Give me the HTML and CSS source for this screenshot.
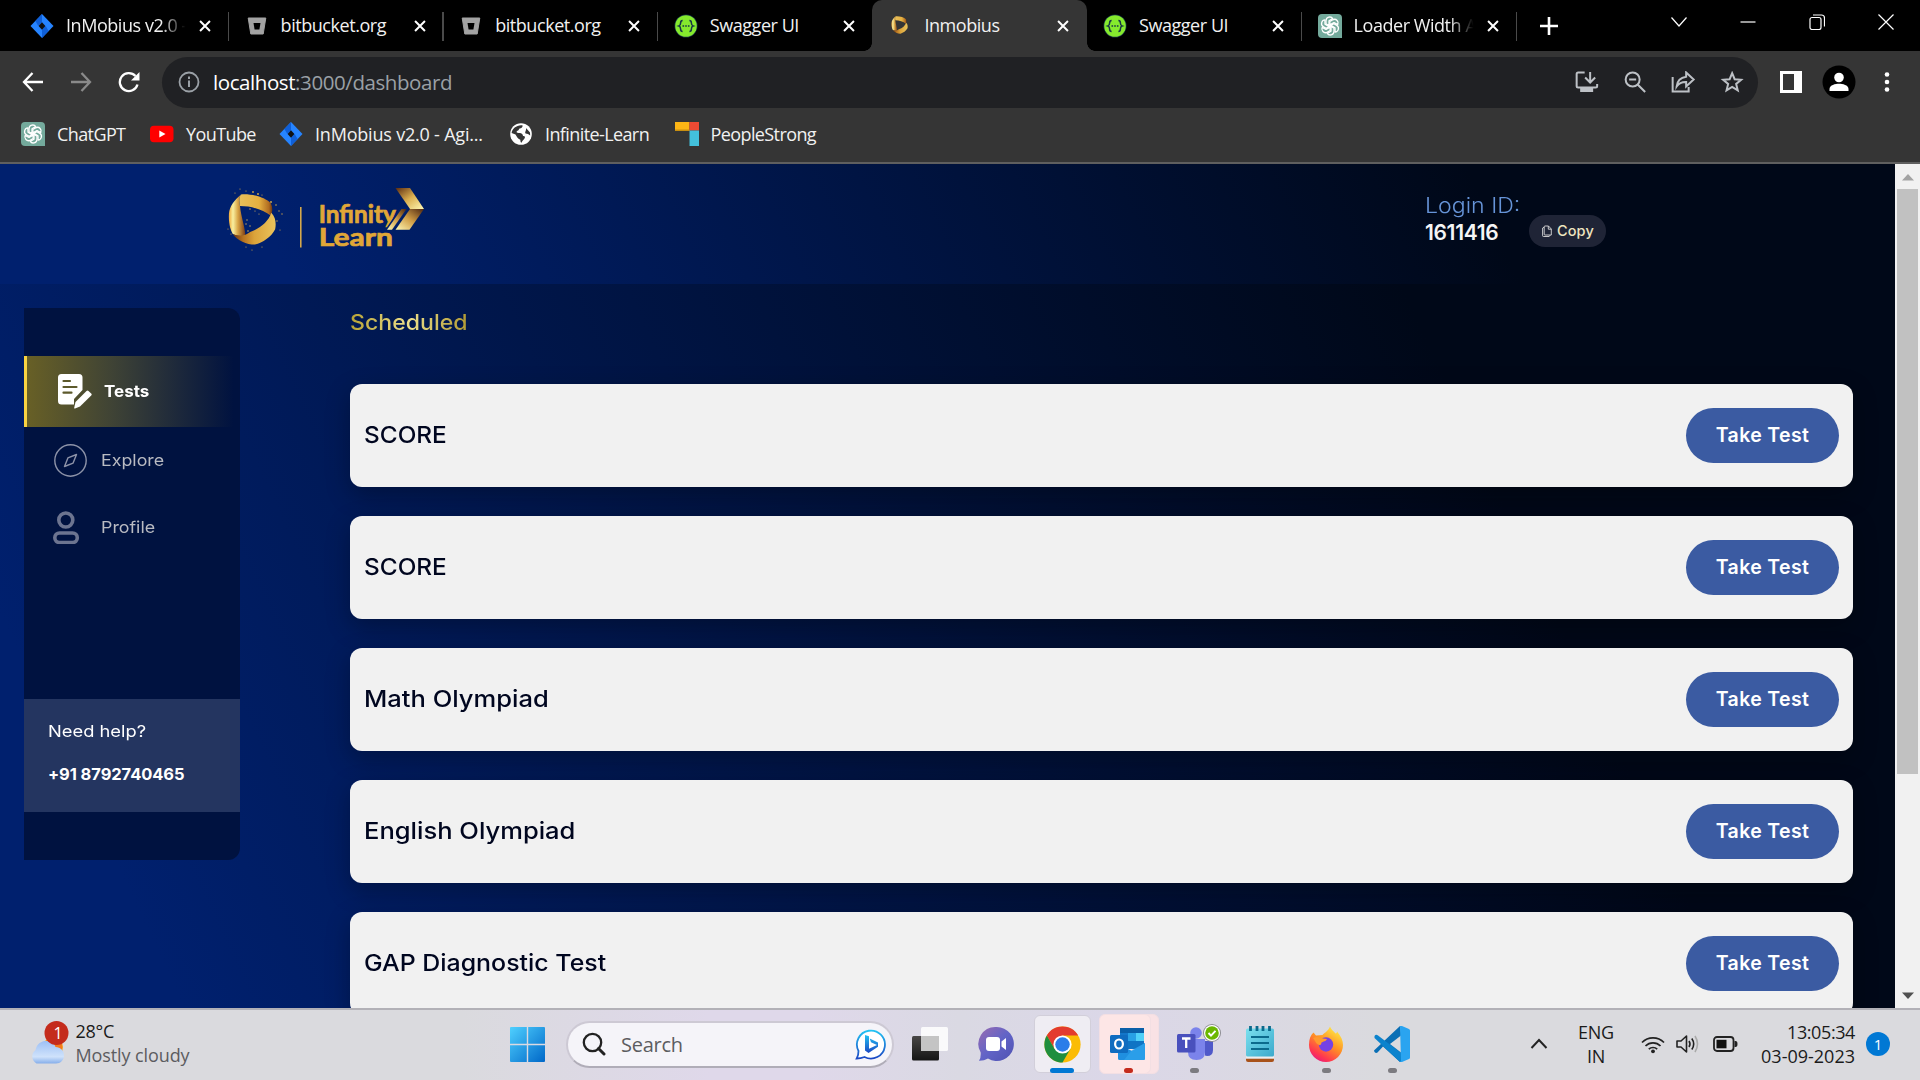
FILE: index.html
```
<!DOCTYPE html>
<html lang="en">
<head>
<meta charset="utf-8">
<title>Inmobius</title>
<link rel="stylesheet" href="styles.css">
</head>
<body>
<svg class="defs" width="0" height="0" aria-hidden="true">
  <defs>
    <linearGradient id="goldH" x1="0" y1="0" x2="1" y2="0"><stop offset="0" stop-color="#f0a93a"/><stop offset=".25" stop-color="#f8efa0"/><stop offset=".55" stop-color="#d9a445"/><stop offset="1" stop-color="#7b3d16"/></linearGradient>
    <linearGradient id="goldTop" x1="0" y1="0" x2="1" y2="0"><stop offset="0" stop-color="#e8c05a"/><stop offset=".6" stop-color="#e5b040"/><stop offset=".9" stop-color="#b06b20"/><stop offset="1" stop-color="#6b3513"/></linearGradient>
    <linearGradient id="goldBot" x1="0" y1="0" x2="1" y2="0"><stop offset="0" stop-color="#6b3513"/><stop offset=".25" stop-color="#b87420"/><stop offset=".5" stop-color="#dba33a"/><stop offset="1" stop-color="#ebc45c"/></linearGradient>
    <linearGradient id="arrowTop" x1="0" y1="0" x2="1" y2="1"><stop offset="0" stop-color="#5a2a10"/><stop offset=".5" stop-color="#dcb050"/><stop offset="1" stop-color="#fff9b5"/></linearGradient>
    <linearGradient id="arrowBot" x1="1" y1="0" x2="0" y2="1"><stop offset="0" stop-color="#4a2410"/><stop offset=".5" stop-color="#cf9c45"/><stop offset="1" stop-color="#fff9b5"/></linearGradient>
    <linearGradient id="win" x1="0" y1="0" x2="1" y2="1"><stop offset="0" stop-color="#4fd0ff"/><stop offset="1" stop-color="#0067c8"/></linearGradient>
    <linearGradient id="bing" x1="0" y1="0" x2="0" y2="1"><stop offset="0" stop-color="#22c3f3"/><stop offset="1" stop-color="#1b48c4"/></linearGradient>
    <linearGradient id="chat" x1="0" y1="0" x2="1" y2="1"><stop offset="0" stop-color="#9a6bb0"/><stop offset=".5" stop-color="#6264c7"/><stop offset="1" stop-color="#4f52b2"/></linearGradient>
    <linearGradient id="cloud" x1="0" y1="0" x2="0" y2="1"><stop offset="0" stop-color="#9dc0f5"/><stop offset=".7" stop-color="#cfe2fb"/><stop offset="1" stop-color="#86aeea"/></linearGradient>
    <linearGradient id="fox" x1=".8" y1="0" x2=".2" y2="1"><stop offset="0" stop-color="#fff14a"/><stop offset=".45" stop-color="#ff9324"/><stop offset=".8" stop-color="#ff3750"/><stop offset="1" stop-color="#e31587"/></linearGradient>
    <linearGradient id="note" x1="0" y1="0" x2="1" y2="1"><stop offset="0" stop-color="#7be0ee"/><stop offset="1" stop-color="#3ba9cc"/></linearGradient>
    <linearGradient id="dark" x1="0" y1="0" x2="0" y2="1"><stop offset="0" stop-color="#484645"/><stop offset="1" stop-color="#151515"/></linearGradient>
    <symbol id="i-jira" viewBox="0 0 24 24"><path d="M12 0l11.500 12L12 24 .5 12z" fill="#2684ff"/><path d="M12 0v8.200L8.300 12 5.400 6.900zM12 24v-8.200l3.700-3.800 2.900 5.100z" fill="#0f5fd8"/><path d="M12 8.200l3.400 3.800-3.400 3.800L8.600 12z" fill="#111"/></symbol>
    <symbol id="i-bucket" viewBox="0 0 24 24"><path d="M3.200 4h17.600l-2.600 16H5.800z" fill="#a3a3a3" stroke="#a3a3a3" stroke-linejoin="round"/><path d="M8.500 9h7l-1.100 6.500H9.600z" fill="#000"/></symbol>
    <symbol id="i-swagger" viewBox="0 0 24 24"><circle cx="12" cy="12" r="11.500" fill="#173647"/><circle cx="12" cy="12" r="10.800" fill="#85ea2d"/><path d="M8.600 6.500c-2 0-2 1-2 2.500s0 2.500-1.700 3c1.700.5 1.700 1.500 1.700 3s0 2.500 2 2.500M15.400 6.500c2 0 2 1 2 2.500s0 2.500 1.700 3c-1.700.5-1.700 1.500-1.700 3s0 2.500-2 2.500" fill="none" stroke="#173647" stroke-width="1.500"/><path d="M8.500 12h1.600m1.100 0h1.600m1.100 0h1.600" stroke="#173647" stroke-width="1.500"/></symbol>
    <symbol id="i-gpt" viewBox="0 0 24 24"><path d="M4 0h16a4 4 0 0 1 4 4v20H4a4 4 0 0 1-4-4V4a4 4 0 0 1 4-4z" fill="#74aa9c"/><g fill="none" stroke="#fff" stroke-width="1.300" stroke-linejoin="round"><path id="petal" d="M12 12.200l-4-2.300V6.800c0-4.300 5.200-4.800 6.700-2.200L11 6.800v4.800"/><use href="#petal" transform="rotate(60 12 12)"/><use href="#petal" transform="rotate(120 12 12)"/><use href="#petal" transform="rotate(180 12 12)"/><use href="#petal" transform="rotate(240 12 12)"/><use href="#petal" transform="rotate(300 12 12)"/></g></symbol>
    <symbol id="i-ring" viewBox="0 0 52 54"><path d="M13 1C7 6 1 13 .5 21c-.5 8 1 16 4 21 4 2 9 3 13 1C17 34 13 24 12 13 11 8 11 4 13 1z" fill="url(#goldH)"/><path d="M13 1c11-1 25 3 31 9 2 4 2 8 0 13-8-6-20-10-32-10-1-5-1-9 1-12z" fill="url(#goldTop)"/><path d="M44.500 20c5 5 5 12 4 17-4 8-13 14-21 16-9 0-18-4-23-11 7 3 13 2 18-2 11-4 19-11 22-20z" fill="url(#goldBot)"/></symbol>
    <symbol id="i-x" viewBox="0 0 20 20"><path d="M4.500 4.500l11 11m0-11l-11 11" stroke="#fff" stroke-width="2.200"/></symbol>
  </defs>
</svg>

<div class="screen">
  <div class="tabs">
    <div class="tab"><svg class="fav"><use href="#i-jira"/></svg><span class="tab-text tab-text--fade">InMobius v2.0 -</span><svg class="close"><use href="#i-x"/></svg></div>
    <div class="tab tab--line"><svg class="fav"><use href="#i-bucket"/></svg><span class="tab-text">bitbucket.org</span><svg class="close"><use href="#i-x"/></svg></div>
    <div class="tab tab--line"><svg class="fav"><use href="#i-bucket"/></svg><span class="tab-text">bitbucket.org</span><svg class="close"><use href="#i-x"/></svg></div>
    <div class="tab tab--line"><svg class="fav"><use href="#i-swagger"/></svg><span class="tab-text">Swagger UI</span><svg class="close"><use href="#i-x"/></svg></div>
    <div class="tab tab--active"><svg class="fav fav--ring"><use href="#i-ring"/></svg><span class="tab-text">Inmobius</span><svg class="close"><use href="#i-x"/></svg></div>
    <div class="tab"><svg class="fav"><use href="#i-swagger"/></svg><span class="tab-text">Swagger UI</span><svg class="close"><use href="#i-x"/></svg></div>
    <div class="tab tab--line tab--last"><svg class="fav"><use href="#i-gpt"/></svg><span class="tab-text tab-text--fade">Loader Width A</span><svg class="close"><use href="#i-x"/></svg></div>
    <div class="new-tab"><svg width="20" height="20" viewBox="0 0 20 20"><path d="M10 1v18M1 10h18" stroke="#fff" stroke-width="2.600"/></svg></div>
    <div class="window-controls">
      <svg width="16" height="16" viewBox="0 0 16 16"><path d="M.5 3.500L8 12l7.500-8.500"/></svg>
      <svg width="16" height="16" viewBox="0 0 16 16"><path d="M.5 8h15"/></svg>
      <svg width="16" height="16" viewBox="0 0 16 16"><rect x="1" y="3.500" width="11" height="12" rx="2"/><path d="M4 1h8.500q3 0 3 3v8.500"/></svg>
      <svg width="16" height="16" viewBox="0 0 16 16"><path d="M.5.500l15 15m0-15l-15 15"/></svg>
    </div>
  </div>

  <div class="toolbar">
    <div class="tool"><svg width="22" height="20" viewBox="0 0 22 20" class="nav"><path d="M21 10H2m8.500-9L2 10l8.500 9"/></svg></div>
    <div class="tool"><svg width="22" height="20" viewBox="0 0 22 20" class="nav nav--off"><path d="M1 10h19M11.500 1l8.500 9-8.500 9"/></svg></div>
    <div class="tool"><svg width="22" height="22" viewBox="0 0 22 22" class="nav"><path d="M19.500 13.500A9 9 0 1 1 17.500 5"/><path d="M21.500 1v8.500H13z" fill="#fff" stroke="none"/></svg></div>
    <div class="omnibox">
      <svg width="22" height="22" viewBox="0 0 22 22"><circle cx="11" cy="11" r="9.500" fill="none" stroke="#9aa0a6" stroke-width="1.800"/><path d="M11 9.500V16M11 5.500V8" stroke="#9aa0a6" stroke-width="2"/></svg>
      <span class="url"><span class="host">localhost</span>:3000/dashboard</span>
      <div class="omni-icons">
        <svg width="24" height="22" viewBox="0 0 24 22"><path d="M9.500 1.500H3q-1.500 0-1.500 1.500v12Q1.500 16.500 3 16.500h17.500q1.500 0 1.500-1.500v-2M15 1v10m-5-4.500l5 5 5-5"/><path d="M5 17h13v4H5z" fill="#bdc1c6" stroke="none"/></svg>
        <svg width="22" height="22" viewBox="0 0 22 22"><circle cx="8.500" cy="8.500" r="7"/><path d="M13.500 13.500L21 21M5 8.500h7"/></svg>
        <svg width="24" height="22" viewBox="0 0 24 22"><path d="M1.500 6v14.500h16V16M15 1.500l7.500 7-7.500 7v-4.500c-4-.2-7 1-9.500 4.500.5-5 3.500-9 9.500-9.800z"/></svg>
        <svg width="22" height="22" viewBox="0 0 22 22"><path d="M11 2.200l2.500 6 6.500.5-5 4.200 1.600 6.400L11 15.900l-5.600 3.400L7 12.900 2 8.700l6.500-.5z"/></svg>
      </div>
    </div>
    <div class="tool tool--panel"><svg width="22" height="22" viewBox="0 0 22 22"><path fill="#fff" fill-rule="evenodd" d="M0 0h22v22H0zM3 3v16h11V3z"/></svg></div>
    <div class="tool"><svg width="34" height="34" viewBox="0 0 34 34"><circle cx="17" cy="17" r="16.500" fill="#000"/><circle cx="17" cy="12.500" r="4.800" fill="#fff"/><path d="M7.500 26v-2c0-4 6-5.300 9.500-5.300s9.500 1.300 9.500 5.300v2z" fill="#fff"/></svg></div>
    <div class="tool"><svg width="6" height="22" viewBox="0 0 6 22" fill="#fff"><circle cx="3" cy="3.500" r="2.300"/><circle cx="3" cy="11" r="2.300"/><circle cx="3" cy="18.500" r="2.300"/></svg></div>
  </div>

  <div class="bookmarks">
    <div class="bookmark"><svg class="fav"><use href="#i-gpt"/></svg>ChatGPT</div>
    <div class="bookmark"><svg class="fav" viewBox="0 0 24 24"><rect x="0" y="3.800" width="23.500" height="16.500" rx="4" fill="#f00"/><path d="M9.300 8.500l6.200 3.500-6.200 3.500z" fill="#fff"/></svg>YouTube</div>
    <div class="bookmark bookmark--long"><svg class="fav"><use href="#i-jira"/></svg>InMobius v2.0 - Agi...</div>
    <div class="bookmark"><svg class="fav" viewBox="0 0 24 24"><circle cx="12" cy="12" r="10.800" fill="#fff"/><path d="M13.500 3.300c.5 2-1 3-3 3.200-1 1-.5 2-2.500 2.500-1 1 0 2 1.500 2 2 0 4.500.5 4.500 3 2-.2 2.500 1 1.500 2.500-1 2-2 1.500-3 4.200-1.200-.5-1-2-1.200-3-2.800-1-3.500-3-4.800-5.200L2.600 11c.6-4.500 5.400-8.500 10.900-7.700zM17 6l4 4.500.2 3-2.200-1.500-2.500-.5c-1-2 1-2.500.5-5.500z" fill="#353535"/></svg>Infinite-Learn</div>
    <div class="bookmark"><svg class="fav" viewBox="0 0 24 24"><path d="M0 0h14.500v9H0z" fill="#fdb515"/><path d="M0 7.500h14.500V9H0z" fill="#c98f10"/><path d="M14.500 0H24v8.500h-9.500z" fill="#ee4a33"/><path d="M14.500 8.500H24V24h-9.500z" fill="#43c1dc"/></svg>PeopleStrong</div>
  </div>

  <div class="viewport">
    <div class="page">
      <header class="header">
        <svg class="logo" width="212" height="80" viewBox="220 184 212 80">
          <g fill="#c9a24a"><circle cx="240" cy="189" r=".6"/><circle cx="253" cy="192" r=".9"/><circle cx="258" cy="194" r="1"/><circle cx="262" cy="195" r=".6"/><circle cx="235" cy="193" r=".6"/><circle cx="246" cy="191" r=".6"/><circle cx="271" cy="202" r="1"/><circle cx="276" cy="205" r=".8"/><circle cx="279" cy="211" r=".7"/><circle cx="282" cy="214" r=".7"/><circle cx="277" cy="221" r=".7"/><circle cx="280" cy="230" r=".6"/><circle cx="228" cy="229" r=".6"/><circle cx="231" cy="234" r=".6"/><circle cx="252" cy="250" r=".6"/><circle cx="246" cy="247" r=".6"/><circle cx="262" cy="247" r=".6"/></g>
          <svg x="228" y="193.500" width="51" height="52"><use href="#i-ring"/></svg>
          <g fill="#d2ae5c"><circle cx="250" cy="209" r=".7"/><circle cx="255" cy="211" r=".6"/><circle cx="259" cy="214" r=".6"/><circle cx="247" cy="220" r=".7"/><circle cx="250" cy="226" r=".7"/><circle cx="248" cy="231" r=".8"/><circle cx="246" cy="224" r=".7"/></g>
          <path d="M300.800 207v40.500" stroke="#e0b04a" stroke-width="1.500"/>
          <g class="logo-text"><text x="318.800" y="223" textLength="77" lengthAdjust="spacingAndGlyphs">Infinity</text><text x="318.800" y="246.400" textLength="74" lengthAdjust="spacingAndGlyphs">Learn</text></g>
          <path d="M400.500 207.500h8.500l-16 22.500h-8z" fill="#00206c"/>
          <path d="M395.500 188h14.500l14 21h-14z" fill="url(#arrowTop)"/><path d="M410 209h14l-14.500 20.700h-14z" fill="url(#arrowBot)"/><path d="M401.500 209h5l-14.500 20.700h-5z" fill="url(#arrowBot)"/>
        </svg>
        <div class="login"><span class="login-label">Login ID:</span><span class="login-id">1611416</span></div>
        <div class="copy"><svg width="10" height="12" viewBox="0 0 10 12" fill="none" stroke="#d9d9d9" stroke-width=".9"><path d="M3 1h3.500L9.300 4v6H3q-.8 0-.8-.8V1.800Q2.200 1 3 1zM6.300 1v3.200h3"/><path d="M2.200 2.200L.6 3v7.700q0 .8.800.8h5.800l1-1.400"/></svg>Copy</div>
      </header>
      <div class="body">
        <aside class="sidebar">
          <div class="item item--active"><svg width="34" height="35" viewBox="0 0 34 35"><path d="M3.500 0H21q3.500 0 3.500 3.500V16L16 25v5.500H3.500Q0 30.500 0 27V3.500Q0 0 3.500 0z" fill="#fff"/><path d="M5.500 7h6.500M5.500 13h13M5.500 18.700h8" stroke="#5d5a2c" stroke-width="2.200" stroke-linecap="round"/><path d="M28.500 17q1-.8 2 0l2.700 2.600q1 1 0 2L22 32.500l-5 2q-1 .2-.8-.8l1.300-5.700z" fill="#fff"/></svg><span class="label label--bold">Tests</span></div>
          <div class="item item--explore"><svg width="33" height="33" viewBox="0 0 33 33" fill="none" stroke="#8d93a8" stroke-width="1.400"><circle cx="16.500" cy="16.500" r="15.700"/><path d="M22.500 10.500l-3.400 8.600-8.600 3.400 3.400-8.600z" stroke-linejoin="round"/></svg><span class="label">Explore</span></div>
          <div class="item item--profile"><svg width="33" height="33" viewBox="0 0 33 33" fill="none"><g stroke="#6c7490" stroke-width="3.600"><circle cx="12.800" cy="9" r="7"/><rect x="1.800" y="22" width="22.500" height="9.500" rx="4.700"/></g></svg><span class="label">Profile</span></div>
          <div class="help"><span class="question">Need help?</span><span class="phone">+91 8792740465</span></div>
        </aside>
        <main class="content">
          <h1 class="heading">Scheduled</h1>
          <div class="cards">
            <div class="card"><span class="title title--caps">SCORE</span><span class="button">Take Test</span></div>
            <div class="card"><span class="title title--caps">SCORE</span><span class="button">Take Test</span></div>
            <div class="card"><span class="title">Math Olympiad</span><span class="button">Take Test</span></div>
            <div class="card"><span class="title">English Olympiad</span><span class="button">Take Test</span></div>
            <div class="card"><span class="title title--mixed">GAP Diagnostic Test</span><span class="button">Take Test</span></div>
          </div>
        </main>
      </div>
    </div>
    <div class="scrollbar">
      <svg width="12" height="7" viewBox="0 0 12 7"><path d="M0 6.500L6 0l6 6.500z" fill="#a3a3a3"/></svg>
      <div class="thumb"></div>
      <svg class="down" width="12" height="7" viewBox="0 0 12 7"><path d="M0 .5L6 7l6-6.500z" fill="#505050"/></svg>
    </div>
  </div>

  <div class="taskbar">
    <div class="weather">
      <svg width="44" height="48" viewBox="0 0 44 48"><circle cx="25" cy="28" r="10" fill="#f59a1c"/><path d="M27 22h7v8h-7z" fill="#f57a1c"/><path d="M8.500 44.500a8 8 0 0 1-1-13.500c1.500-6.500 6-9 10.500-9 5 0 8.500 2.500 9.500 6 5 0 8.500 4 8.500 8.500 0 4.500-3.500 8-8 8z" fill="url(#cloud)"/><circle cx="28.500" cy="14" r="12" fill="#c42b1c"/><text x="30" y="19.500" class="badge-text">1</text></svg>
      <div class="weather-text"><span class="temp">28°C</span><span class="sky">Mostly cloudy</span></div>
    </div>
    <svg class="start" width="35" height="35" viewBox="0 0 35 35" fill="url(#win)"><path d="M1 0h15.800v16.800H0V1q0-1 1-1zM18.200 0H34q1 0 1 1v15.800H18.200zM0 18.200h16.800V35H1q-1 0-1-1zM18.200 18.200H35V34q0 1-1 1H18.200z"/></svg>
    <div class="search">
      <svg width="24" height="24" viewBox="0 0 24 24" fill="none" stroke="#222" stroke-width="2.300"><circle cx="10.500" cy="10.500" r="8.700"/><path d="M16.500 16.500l5.500 5.500" stroke-width="3" stroke-linecap="round"/></svg>
      <span class="search-text">Search</span>
      <svg class="bing" width="31" height="31" viewBox="0 0 31 31"><path d="M3.500 22A14 14 0 1 1 9.500 28q-4 1.500-7.800 1.500c1.500-2.500 1.800-4.500 1.800-7.500z" fill="#fff" stroke="url(#bing)" stroke-width="1.800"/><path d="M10 6l4 1.300v12.500L22 16l-6-2.800-1.300-3.700L23 13.500v4.200L13.500 24 10 21.500z" fill="url(#bing)"/></svg>
    </div>
    <div class="apps">
      <div class="app"><svg width="36" height="36" viewBox="0 0 36 36"><rect x="0" y="10" width="27" height="24.500" rx="1.500" fill="url(#dark)"/><rect x="9" y="1" width="27" height="24" rx="1.500" fill="#fff" opacity=".85"/><path d="M9 10h18v15H9z" fill="#c4c4c4"/></svg></div>
      <div class="app"><svg width="36" height="36" viewBox="0 0 36 36"><path d="M18.500 1a17 17 0 1 1-8.500 31.500q-4 2.300-9 2.200 2-2.300 1.700-8.200A17 17 0 0 1 18.500 1z" fill="url(#chat)"/><rect x="8" y="11" width="14" height="14" rx="3" fill="#fff"/><path d="M23.500 15.500L28 12v12l-4.500-3.500z" fill="#fff"/></svg></div>
      <div class="app app--chrome"><div class="plate"></div><svg width="37" height="37" viewBox="0 0 48 48"><circle cx="24" cy="24" r="23.500" fill="#fbbc05"/><path d="M3.650 12.250A23.500 23.500 0 0 1 44.350 12.250L24 12.300 13.800 29.900z" fill="#e33b2e"/><path d="M3.650 12.250A23.500 23.500 0 0 0 24 47.500L34.200 29.900 13.800 29.900z" fill="#1f8e3e"/><circle cx="24" cy="24" r="11.800" fill="#fff"/><circle cx="24" cy="24" r="9.400" fill="#2b7de9"/></svg><i class="mark mark--active"></i></div>
      <div class="app app--outlook"><div class="plate plate--back"></div><div class="plate plate--alert"></div><svg width="36" height="36" viewBox="0 0 36 36"><path d="M10 2h24v18H10z" fill="#0a5fa8"/><path d="M10 7h8v8h-8z" fill="#1376c9"/><path d="M18 7h8v8h-8z" fill="#28a0e5"/><path d="M26 7h8v8h-8z" fill="#50d0f8"/><path d="M18 15h16v8H18z" fill="#0f74c4"/><path d="M8 18l14 7 13-8v15.500q0 1.500-1.500 1.500h-24Q8 34 8 32.500z" fill="#1f8fe0"/><path d="M22 24l13-7v15.500q0 1.500-1.500 1.500H14z" fill="#2fa4ec" opacity=".7"/><rect x="0" y="9" width="18" height="18" rx="1.500" fill="#0f6cc0"/><ellipse cx="9" cy="18" rx="3.900" ry="4.500" fill="none" stroke="#fff" stroke-width="2.200"/></svg><i class="mark mark--alert"></i></div>
      <div class="app"><svg class="teams" width="46" height="40" viewBox="0 0 46 40"><circle cx="19" cy="9" r="5.800" fill="#7b83eb"/><path d="M11 15h17v13q0 8-8.500 8T11 28z" fill="#7b83eb"/><path d="M28 17h8v9q0 6-6 6l-2-.5z" fill="#5059c9"/><rect x="0" y="10" width="18.500" height="18.500" rx="1.500" fill="#4950bd"/><path d="M5 14.500h8.500M9.200 14.500V24" stroke="#fff" stroke-width="2.300"/><circle cx="35" cy="9" r="9" fill="#8d8d92"/><circle cx="35" cy="9" r="8" fill="#fff"/><circle cx="35" cy="9" r="6.800" fill="#6bb700"/><path d="M31.500 9l2.500 2.700 4.500-4.900" fill="none" stroke="#fff" stroke-width="1.900"/></svg><i class="mark"></i></div>
      <div class="app"><svg width="28" height="38" viewBox="0 0 28 38"><path d="M0 33.500h28V35q0 2-2 2H2q-2 0-2-2z" fill="#a8521a"/><path d="M0 30h28v3.500H0z" fill="#eee"/><rect x="0" y="3.500" width="28" height="28" rx="1.500" fill="url(#note)"/><path d="M5 12h18M5 18h18M5 24h18" stroke="#0b6a8c" stroke-width="2"/><path d="M4.500 1v5M11 1v5M17 1v5M23.500 1v5" stroke="#0b6a8c" stroke-width="2.800"/></svg></div>
      <div class="app"><svg width="36" height="36" viewBox="0 0 36 36"><path d="M22 .5c1 3 3.500 4.500 5.500 7 1.200-.2 1.500-1 1.500-2C33 10 35 14.500 35 19a17 17 0 0 1-34 0C1 13 2.500 9 5.500 6.500L8 9.500l6.500-.5C16 7 20 5.500 22 .5z" fill="url(#fox)"/><circle cx="18" cy="18.500" r="7.200" fill="#7542e5"/><path d="M5 12c4-2 7.500-1 10 .5l4 .5c-1 2.500-4 2.500-5.500 3.500-.5 4-3 2-3.500 2C7.500 17 7 14 5 12z" fill="#ff9a2e"/></svg><i class="mark"></i></div>
      <div class="app"><svg width="36" height="36" viewBox="0 0 36 36"><path d="M26 0l1 7v22l-1 7L9 20.500l-5.500 6Q2 27.500.5 26L0 24.500z" fill="#0a6fb5"/><path d="M.5 10q1.500-2 3.500-.5L27 27v9h-1L.5 12z" fill="#0c83cd"/><path d="M27 9.500L16 18l11 8.500z" fill="#dbdade"/><path d="M26 0h2l7 3q1 .5 1 1.500v27q0 1-1 1.500l-7 3h-2l1-1z" fill="#2aa4f0"/></svg><i class="mark"></i></div>
    </div>
    <div class="tray">
      <svg class="chevron" width="40" height="16" viewBox="0 0 40 16"><path d="M12.500 12l7.500-8 7.500 8" fill="none" stroke="#222" stroke-width="2"/></svg>
      <div class="lang"><span>ENG</span><span>IN</span></div>
      <svg class="wifi" width="24" height="20" viewBox="0 0 24 20" fill="none" stroke="#222" stroke-width="1.700"><path d="M1 8.500a15.500 15.500 0 0 1 22 0M4.500 12a10.600 10.600 0 0 1 15 0M7.800 15.200a6 6 0 0 1 8.400 0"/><circle cx="12" cy="17.300" r="1.900" fill="#222" stroke="none"/></svg>
      <svg class="volume" width="24" height="20" viewBox="0 0 24 20" fill="none" stroke="#222" stroke-width="1.600"><path d="M1 7h4l5.500-5v16L5 13H1z" stroke-linejoin="round"/><path d="M13 7q2 3 0 6M15.800 4.500q3.800 5.500 0 11"/><path d="M19 2q5 8 0 16" stroke="#aaa"/></svg>
      <svg class="battery" width="25" height="16" viewBox="0 0 25 16"><rect x="1" y="1" width="19.500" height="14" rx="3" fill="none" stroke="#222" stroke-width="1.800"/><rect x="3.500" y="3.800" width="10" height="8.500" fill="#111"/><path d="M21.500 5h1q2 0 2 3t-2 3h-1z" fill="#222"/></svg>
      <div class="clock"><span class="time">13:05:34</span><span>03-09-2023</span></div>
      <div class="notice">1</div>
    </div>
  </div>
</div>
</body>
</html>
```

FILE: styles.css
```
* { box-sizing: border-box; }
body { margin: 0; background: #000; overflow: hidden; }
.defs { position: absolute; }
svg { display: block; flex: none; }

.screen {
  width: 1920px; height: 1080px; overflow: hidden;
  display: flex; flex-direction: column;
  font-family: "Open Sans", "Noto Sans", sans-serif;
  font-size: 18px; white-space: nowrap;
}

/* Browser tabs */
.tabs { height: 51px; flex: none; display: flex; align-items: center; padding-left: 14px; background: #000; color: #f1f1f1; }
.tab { position: relative; width: 214.6px; height: 51px; flex: none; display: flex; align-items: center; padding-left: 16px; }
.tab--line::before, .tab--last::after { content: ""; position: absolute; left: -1px; top: 12px; width: 1.5px; height: 29px; background: #4a4a4a; }
.tab--last::after { left: auto; right: -1px; }
.tab--active { background: #353535; border-radius: 10px 10px 0 0; }
.tab--active::before, .tab--active::after { content: ""; position: absolute; bottom: 0; width: 8px; height: 8px; }
.tab--active::before { left: -8px; background: radial-gradient(circle at 0 0, transparent 7.5px, #353535 8px); }
.tab--active::after { right: -8px; background: radial-gradient(circle at 100% 0, transparent 7.5px, #353535 8px); }
.fav { width: 24px; height: 24px; }
.fav--ring { width: 18px; height: 18px; margin: 0 3px 2px; }
.tab-text { width: 122px; margin-left: 12px; padding-bottom: 1px; letter-spacing: -.45px; }
.tab-text--fade { -webkit-mask-image: linear-gradient(90deg, #000 78%, transparent 98%); mask-image: linear-gradient(90deg, #000 78%, transparent 98%); }
.close { width: 18px; height: 18px; margin-left: 8px; }
.new-tab { width: 66px; display: flex; justify-content: center; }
.window-controls { display: flex; margin-left: auto; margin-bottom: 8px; }
.window-controls svg { margin: 0 26.5px; fill: none; stroke: #fff; stroke-width: 1.2; }

/* Toolbar */
.toolbar { height: 62px; flex: none; display: flex; align-items: center; padding-left: 9px; background: #353535; }
.tool { width: 48px; display: flex; justify-content: center; }
.tool--panel { margin-left: 9px; }
.nav { fill: none; stroke: #fff; stroke-width: 2.3; }
.nav--off { stroke: #8a8a8a; }
.omnibox { width: 1596px; height: 51px; margin-left: 9px; border-radius: 26px; background: #202124; display: flex; align-items: center; padding: 0 2px 0 16px; }
.url { margin-left: 13px; padding-bottom: 1px; font-size: 20.5px; letter-spacing: -.42px; color: #9aa0a6; }
.host { color: #fff; }
.omni-icons { display: flex; align-items: center; margin-left: auto; }
.omni-icons svg { width: 48.3px; fill: none; stroke: #bdc1c6; stroke-width: 2; }

/* Bookmarks */
.bookmarks { height: 51px; flex: none; display: grid; grid-template-columns: 129px 129px 230px 165.5px auto; align-items: center; padding: 0 0 7px 21px; background: #353535; border-bottom: 2px solid #5f5f5f; color: #f1f1f1; }
.bookmark { display: flex; align-items: center; gap: 12px; letter-spacing: -.6px; }
.bookmark--long { letter-spacing: -.2px; }

/* Web page */
.viewport { height: 844px; flex: none; display: flex; overflow: hidden; font-family: Inter, "Open Sans", sans-serif; }
.page { width: 1895px; background: linear-gradient(65deg, #00206e 8%, #000818 76%); }
.header { height: 120px; display: flex; padding: 20px 289px 0 220px; background: linear-gradient(65deg, #00206e 15%, #000818 78%); }
.logo-text { font: 700 25px Lato, sans-serif; fill: #e0a737; stroke: #e0a737; stroke-width: .7px; }
.login { width: 104px; margin: 9px 0 0 auto; display: flex; flex-direction: column; align-items: flex-start; line-height: 26.5px; font-size: 21px; }
.login-label { font-weight: 300; transform: scaleX(1.1); transform-origin: 0 50%; color: #6694d8; }
.login-id { font-weight: 600; letter-spacing: -.35px; color: #f5f5f5; }
.copy { width: 77px; height: 32px; margin-top: 31px; border-radius: 16px; background: #1f2436; display: flex; align-items: center; gap: 5px; padding: 0 0 1px 13px; font-size: 14.5px; font-weight: 500; letter-spacing: .1px; color: #efe6c0; }
.body { display: flex; align-items: flex-start; padding-left: 24px; }

.sidebar { width: 216px; height: 552px; margin-top: 24px; padding: 48px 0; border-radius: 0 12px 12px 0; background: #001240; display: flex; flex-direction: column; font-size: 16.5px; }
.item { height: 67px; display: flex; align-items: center; gap: 14px; padding-left: 30px; color: #b9bbc2; }
.item--active { height: 71px; gap: 12px; padding-left: 31px; border-left: 3px solid #f9d342; background: linear-gradient(90deg, #686026, #3f4335 40%, #001240 97%); color: #fff; }
.item--profile { padding-left: 29px; gap: 15px; }
.label { padding-bottom: 2px; transform: scaleX(1.08); transform-origin: 0 50%; }
.label--bold { font-weight: 700; transform: scaleX(1.03); }
.help { height: 113px; margin-top: auto; padding: 20px 0 0 24px; background: #243560; color: #fff; display: flex; flex-direction: column; align-items: flex-start; line-height: 24px; gap: 19px; }
.question { transform: scaleX(1.11); transform-origin: 0 50%; }
.phone { font-weight: 700; letter-spacing: -.08px; }

.content { width: 1503px; margin-left: 110px; }
.heading { width: max-content; margin: 23px 0 0; height: 77px; font-size: 21px; line-height: 32px; font-weight: 500; transform: scaleX(1.1); transform-origin: 0 50%; color: transparent; background: linear-gradient(90deg, #b6a235, #ede08a 50%, #b09a34); -webkit-background-clip: text; background-clip: text; }
.cards { display: flex; flex-direction: column; gap: 29px; }
.card { height: 103px; flex: none; display: flex; align-items: center; justify-content: space-between; padding: 0 14px 0 14px; border-radius: 12px; background: #f1f1f1; box-shadow: 0 8px 24px rgba(0, 0, 0, .28); }
.title { font-size: 23px; font-weight: 500; color: #00061f; padding-bottom: 1px; transform: scaleX(1.11); transform-origin: 0 50%; }
.title--caps { transform: scaleX(1.06); }
.title--mixed { transform: scaleX(1.083); }
.button { width: 153px; height: 55px; border-radius: 28px; background: #3b5ba2; color: #fff; font-size: 19.5px; font-weight: 600; letter-spacing: .36px; line-height: 54.5px; text-align: center; }

.scrollbar { width: 25px; background: #f1f1f1; display: flex; flex-direction: column; align-items: center; padding-top: 10px; }
.thumb { width: 21px; height: 585px; margin-top: 8px; background: #c1c1c1; }
.down { margin: auto 0 9px; }

/* Taskbar */
.taskbar { height: 72px; flex: none; display: flex; align-items: center; border-top: 2px solid #b2b1b7; padding-bottom: 2px; background: linear-gradient(90deg, #dadade 24%, #dfd8ea 37%, #dfd8ea 42%, #dad9e3 50%, #dbd7e8 58%, #dadade 72%); color: #1b1b1b; }
.weather { width: 510px; display: flex; padding: 0 0 2px 28px; }
.badge-text { font-size: 16px; fill: #fff; text-anchor: middle; }
.weather-text { margin: 0 0 0 3.5px; display: flex; flex-direction: column; line-height: 24px; }
.temp { letter-spacing: -.3px; }
.sky { color: #5c5c60; letter-spacing: -.1px; }
.start { margin-right: 21px; }
.search { width: 328px; height: 47px; border-radius: 24px; border: 2px solid #cdc9d4; border-bottom-color: #b0adb8; background: #f5f4f9; display: flex; align-items: center; padding: 0 6px 0 14px; }
.search-text { margin-left: 15px; font-size: 20px; letter-spacing: -.25px; color: #5c5c60; }
.bing { margin-left: auto; }
.apps { display: flex; margin-left: 3px; height: 68px; }
.app { position: relative; width: 66px; display: flex; align-items: center; justify-content: center; }
.app svg { position: relative; }
.teams { left: 6px; }
.plate { position: absolute; left: 5px; top: 5px; width: 57px; height: 58px; border-radius: 6px; background: #efedf3; border: 1px solid #d2cfda; }
.plate--alert { left: 4px; top: 4px; width: 52px; height: 60px; background: #fde6e6; border-color: #f3dfe3; }
.plate--back { left: 30px; top: 4px; width: 34px; height: 60px; background: #f9e2e5; border-color: #f3dfe3; }
.mark { position: absolute; left: 29px; bottom: 5px; width: 9px; height: 5px; border-radius: 3px; background: #7c7b80; }
.mark--active { left: 21px; width: 24px; background: #0078d4; }
.mark--alert { background: #c42b1c; }
.tray { margin-left: auto; display: flex; align-items: center; padding-right: 30px; line-height: 24px; }
.lang { width: 60px; margin-left: 7px; text-align: center; display: flex; flex-direction: column; letter-spacing: -.2px; }
.wifi { margin-left: 15px; }
.volume { margin-left: 11px; }
.battery { margin-left: 13px; }
.clock { width: 117px; display: flex; flex-direction: column; align-items: flex-end; }
.time { letter-spacing: -.4px; }
.notice { width: 24px; height: 24px; margin-left: 11px; border-radius: 50%; background: #0078d4; color: #fff; font-size: 15px; text-align: center; }
```
